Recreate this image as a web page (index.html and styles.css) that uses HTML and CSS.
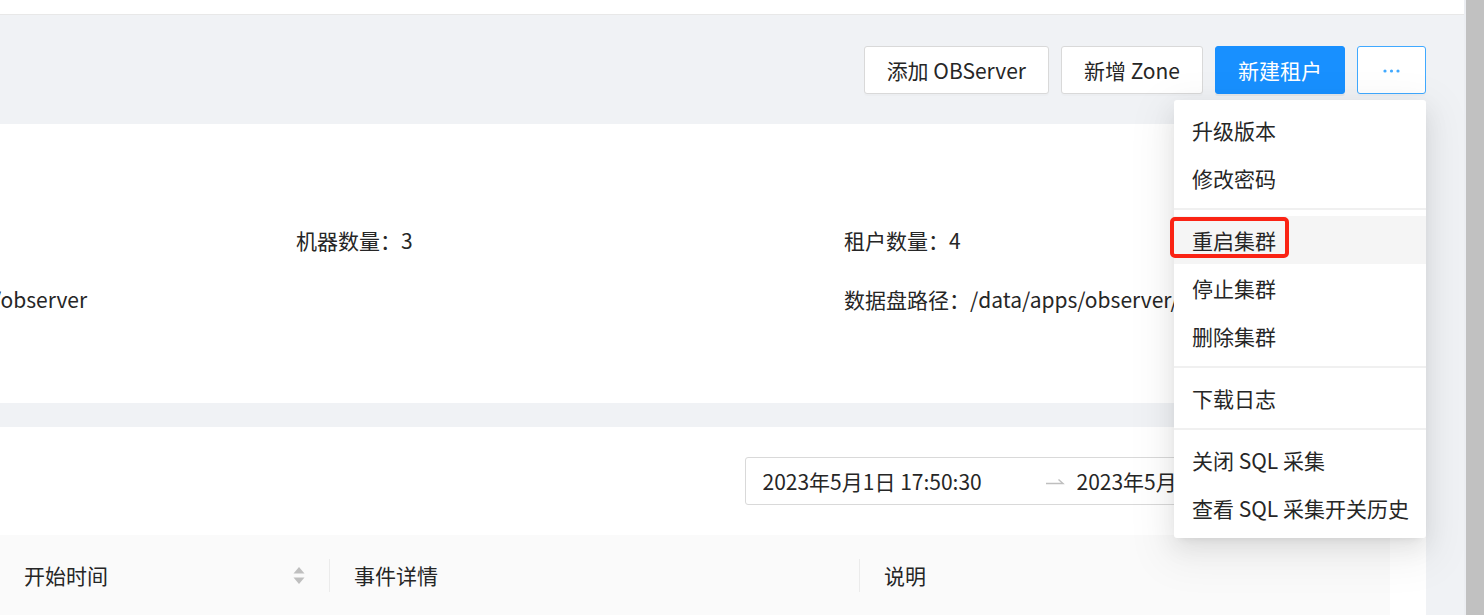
FILE: index.html
```html
<!DOCTYPE html>
<html lang="zh-CN">
<head>
<meta charset="utf-8">
<title>集群详情</title>
<link rel="stylesheet" href="styles.css">
</head>
<body>
<div class="app">
  <div class="main">
    <div class="topbar"></div>
    <div class="content">
      <div class="page-header">
        <div class="actions">
          <button class="btn">添加 OBServer</button>
          <button class="btn">新增 Zone</button>
          <button class="btn btn-primary">新建租户</button>
          <div class="more-wrap">
            <button class="btn btn-more" aria-label="更多">
              <svg width="21" height="21" viewBox="0 0 21 21"><circle cx="4" cy="11" r="1.6" fill="#40a9ff"/><circle cx="10.5" cy="11" r="1.6" fill="#40a9ff"/><circle cx="17" cy="11" r="1.6" fill="#40a9ff"/></svg>
            </button>
            <div class="dropdown">
              <div class="menu-item">升级版本</div>
              <div class="menu-item">修改密码</div>
              <div class="menu-divider"></div>
              <div class="menu-item is-hover">重启集群</div>
              <div class="menu-item">停止集群</div>
              <div class="menu-item">删除集群</div>
              <div class="menu-divider"></div>
              <div class="menu-item">下载日志</div>
              <div class="menu-divider"></div>
              <div class="menu-item">关闭 SQL 采集</div>
              <div class="menu-item">查看 SQL 采集开关历史</div>
              <div class="highlight-box"></div>
            </div>
          </div>
        </div>
      </div>

      <div class="card info-card">
        <div class="desc">
          <div class="desc-item"></div>
          <div class="desc-item">机器数量：3</div>
          <div class="desc-item">租户数量：4</div>
          <div class="desc-item desc-clip">/observer</div>
          <div class="desc-item"></div>
          <div class="desc-item">数据盘路径：/data/apps/observer/store</div>
        </div>
      </div>

      <div class="card event-card">
        <div class="toolbar">
          <div class="range-picker">
            <span class="rp-input">2023年5月1日 17:50:30</span>
            <span class="rp-sep">
              <svg width="21" height="21" viewBox="0 0 21 21"><path d="M2 12.5 H19 L14.5 8.5" fill="none" stroke="#bfbfbf" stroke-width="1.4"/></svg>
            </span>
            <span class="rp-input">2023年5月2日 17:50:30</span>
            <span class="rp-suffix">
              <svg width="21" height="21" viewBox="0 0 21 21"><rect x="2.5" y="4" width="16" height="14" rx="1" fill="none" stroke="#bfbfbf" stroke-width="1.4"/><path d="M2.5 8.5 H18.5 M7 2 V5.5 M14 2 V5.5" stroke="#bfbfbf" stroke-width="1.4"/></svg>
            </span>
          </div>
        </div>
        <div class="table-head">
          <div class="th th-sort">
            <span>开始时间</span>
            <span class="sorter">
              <svg width="12" height="19" viewBox="0 0 12 19"><path d="M6 1 L11.5 7.5 H0.5 Z" fill="#bfbfbf"/><path d="M6 18 L11.5 11.5 H0.5 Z" fill="#bfbfbf"/></svg>
            </span>
          </div>
          <div class="th">事件详情</div>
          <div class="th th-last">说明</div>
        </div>
      </div>
    </div>
  </div>
  <div class="scrollbar"></div>
</div>
</body>
</html>
```

FILE: styles.css
```css
* {
  box-sizing: border-box;
}

html, body {
  margin: 0;
  padding: 0;
  height: 615px;
  overflow: hidden;
}

body {
  font-family: "Noto Sans CJK SC", "Noto Sans", sans-serif;
  font-size: 21px;
  line-height: 33px;
  color: #262626;
  background: #f0f2f5;
}

.app {
  display: flex;
  height: 615px;
}

.main {
  flex: 1;
  min-width: 0;
  display: flex;
  flex-direction: column;
  background: #f0f2f5;
}

.scrollbar {
  width: 20px;
  flex: none;
  background: #c1c1c1;
  border-left: 2px solid #eceef2;
}

.topbar {
  height: 15px;
  flex: none;
  background: #ffffff;
  border-bottom: 1px solid #e8e8e8;
}

.content {
  flex: 1;
  padding-right: 38px;
  overflow: hidden;
}

.page-header {
  height: 109px;
  padding-top: 31px;
}

.actions {
  display: flex;
  justify-content: flex-end;
  gap: 12px;
}

.btn {
  height: 48px;
  padding: 0 22px;
  font-family: inherit;
  font-size: 21px;
  line-height: 33px;
  color: #262626;
  background: #ffffff;
  border: 1px solid #d9d9d9;
  border-radius: 3px;
  box-shadow: 0 2px 0 rgba(0, 0, 0, 0.016);
  display: inline-flex;
  align-items: center;
  justify-content: center;
  cursor: pointer;
}

.btn-primary {
  color: #ffffff;
  background: #1890ff;
  border-color: #1890ff;
  box-shadow: 0 2px 0 rgba(0, 0, 0, 0.045);
}

.btn-more {
  width: 69px;
  padding: 0;
  border-color: #40a9ff;
}

.btn-more svg {
  display: block;
}

.more-wrap {
  position: relative;
}

.dropdown {
  position: absolute;
  top: 54px;
  right: 0;
  width: 252px;
  padding: 6px 0;
  background: #ffffff;
  border-radius: 3px;
  box-shadow: 0 4.5px 9px -6px rgba(0, 0, 0, 0.12),
              0 9px 24px 0 rgba(0, 0, 0, 0.08),
              0 13.5px 42px 12px rgba(0, 0, 0, 0.05);
  z-index: 10;
}

.menu-item {
  height: 48px;
  padding: 7.5px 18px;
  white-space: nowrap;
  color: #262626;
}

.menu-item.is-hover {
  background: #f5f5f5;
}

.menu-divider {
  height: 2px;
  margin: 6px 0;
  background: #f0f0f0;
}

.highlight-box {
  position: absolute;
  left: -4px;
  top: 117px;
  width: 119px;
  height: 41px;
  border: 4px solid #fa2314;
  border-radius: 5px;
  pointer-events: none;
}

.card {
  background: #ffffff;
}

.info-card {
  height: 279px;
  padding-top: 100px;
  overflow: hidden;
}

.desc {
  display: grid;
  grid-template-columns: 296px 548px 1fr;
  row-gap: 26px;
}

.desc-item {
  white-space: nowrap;
  overflow: hidden;
  min-height: 33px;
}

.desc-clip {
  text-indent: -7px;
}

.event-card {
  margin-top: 24px;
  padding-top: 30px;
  padding-right: 36px;
  height: 300px;
}

.toolbar {
  display: flex;
  justify-content: flex-end;
  margin-bottom: 30px;
}

.range-picker {
  width: 645px;
  height: 48px;
  display: flex;
  align-items: center;
  padding: 0 16.5px;
  border: 1px solid #d9d9d9;
  border-radius: 3px;
  background: #ffffff;
}

.rp-input {
  flex: 1;
  min-width: 0;
  white-space: nowrap;
  overflow: hidden;
  color: #262626;
}

.rp-sep {
  padding: 0 12px;
  display: flex;
  align-items: center;
}

.rp-sep svg,
.rp-suffix svg,
.sorter svg {
  display: block;
}

.rp-suffix {
  margin-left: 6px;
  display: flex;
  align-items: center;
}

.table-head {
  display: grid;
  grid-template-columns: 330px 530px 1fr;
  height: 81px;
  background: #fafafa;
}

.th {
  position: relative;
  padding: 24px 24px;
  white-space: nowrap;
  color: #262626;
}

.th::after {
  content: "";
  position: absolute;
  right: 0;
  top: 24px;
  width: 1px;
  height: 33px;
  background: rgba(0, 0, 0, 0.06);
}

.th-last::after {
  display: none;
}

.th-sort {
  display: flex;
  align-items: center;
  justify-content: space-between;
  padding-right: 25px;
}

.sorter {
  display: flex;
  align-items: center;
}
```
